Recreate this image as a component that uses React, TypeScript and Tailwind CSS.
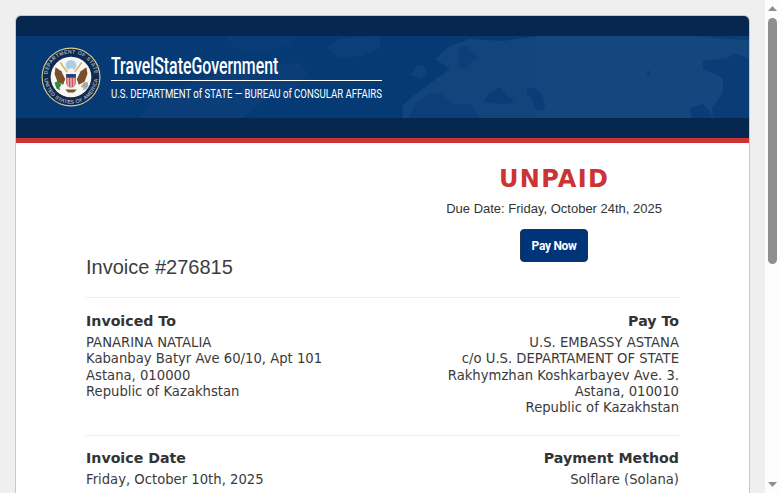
import React from 'react';

const sans = { fontFamily: '"DejaVu Sans", sans-serif' };
const arial = { fontFamily: '"Liberation Sans", sans-serif' };

const Seal = () => (
  <svg width="60" height="60" viewBox="0 0 62 62" className="shrink-0">
    <circle cx="31" cy="31" r="30.5" fill="#d9c98a" />
    <circle cx="31" cy="31" r="29.3" fill="#12294f" />
    <circle cx="31" cy="31" r="21" fill="#f6f6f4" />
    <path id="sealTop" d="M6.500 31a24.500 24.500 0 0 1 49 0" fill="none" />
    <path id="sealBottom" d="M3.500 31a27.500 27.500 0 0 0 55 0" fill="none" />
    <text fill="#dbe2ee" fontSize="5.200" fontFamily="Liberation Sans, sans-serif" letterSpacing="0.5">
      <textPath href="#sealTop" startOffset="50%" textAnchor="middle">DEPARTMENT OF STATE</textPath>
    </text>
    <text fill="#dbe2ee" fontSize="5.200" fontFamily="Liberation Sans, sans-serif" letterSpacing="0.4">
      <textPath href="#sealBottom" startOffset="50%" textAnchor="middle">UNITED STATES OF AMERICA</textPath>
    </text>
    <circle cx="31" cy="19" r="5.500" fill="#a9d0e8" />
    <path d="M15 21l6 4 4 8-2 6-6-3-3-8z" fill="#7b4f27" />
    <path d="M47 21l-6 4-4 8 2 6 6-3 3-8z" fill="#7b4f27" />
    <path d="M20 16l7 10M42 16l-7 10" stroke="#d8b25a" strokeWidth="1.500" />
    <circle cx="31" cy="25" r="3" fill="#f4f2ea" />
    <path d="M26 28h10v9a5 5 0 0 1-10 0z" fill="#c9545c" />
    <rect x="26" y="28" width="10" height="3.500" fill="#23407e" />
    <path d="M28 32v9M31 32v10M34 32v9" stroke="#f1e6e4" strokeWidth="1" />
    <path d="M14 37l4-2 3 4-2 3 1 3-4-2-1-3z" fill="#2f8a3e" />
    <path d="M48 36l-4 1-3 4 3 1-1 3 4-2 2-3z" fill="#a9a9a9" />
    <path d="M25 44h12l-3 3h-6z" fill="#7b4f27" />
  </svg>
);

// faint world map behind the banner text
const WorldMap = () => (
  <svg viewBox="0 0 733 82" preserveAspectRatio="none" className="absolute inset-0 h-full w-full">
    <g fill="#164980">
      <path d="M124 82l17-25 43-14 53-13 47-3 7 10-10 13-37 17-17 15z" opacity="0.35" />
      <path d="M210 0h70l-8 10-24 6-30-4z" opacity="0.2" />
      <path d="M311 12l14-10 39-2v12l-18 8-24 2z" opacity="0.4" />
      <path d="M387 82l-1-12 11-10 27-20 10-7-15-10 15-13 20-7 33 2 34-5h212v82z" opacity="0.8" />
      <path d="M521 0h212v82H521z" opacity="0.5" />
      <path d="M395 39l6-10 7 1 4 8-7 5z" opacity="0.5" />
    </g>
    <g fill="#0a3c77">
      <path d="M441 12l9-3 7 8 7 5-8 3-6 8-9-3 2-9z" opacity="0.7" />
      <path d="M467 66l7-10 10-5 6 7 9 8-12 2-10-1z" opacity="0.9" />
      <path d="M511 53l8-1 7 6 3 12-2 5-8-2-3-10-5-5z" opacity="0.9" />
      <path d="M400 68l12-10h14l11 10h17l10 14h-73z" opacity="0.7" />
      <path d="M687 25l25-3 5-5 10 3 6 3v59h-36l-1-10 11-15v-15l-20-9z" />
      <path d="M674 72l13-4 10 12-2 2h-20z" />
      <path d="M677 0h56v4l-20-1z" />
      <path d="M630 40l3-6 2 4z" />
    </g>
  </svg>
);

const Field = ({ title, right, lines }: { title: string; right?: boolean; lines: string[] }) => (
  <div className={right ? 'text-right' : ''}>
    <strong className="block text-[14.200px] leading-[19px] font-bold text-[#333]">{title}</strong>
    <div className="mt-[4px] text-[13.200px] leading-[16.250px] text-[#3a3a3a]">
      {lines.map((l) => (
        <div key={l}>{l}</div>
      ))}
    </div>
  </div>
);

const Scrollbar = () => (
  <div className="flex w-[15px] shrink-0 flex-col items-center bg-[#fdfdfd]">
    <svg width="9" height="5" viewBox="0 0 9 5" className="mt-[6px] fill-[#8f8f8f]">
      <path d="M4.500 0L9 5H0z" />
    </svg>
    <div className="mt-[7px] h-[246px] w-[9px] rounded-[5px] bg-[#8f8f8f]" />
    <svg width="9" height="5" viewBox="0 0 9 5" className="mt-auto mb-[6px] fill-[#8f8f8f]">
      <path d="M4.500 5L9 0H0z" />
    </svg>
  </div>
);

export default function App() {
  return (
    <div className="flex h-[493px] overflow-hidden bg-[#efefef]" style={sans}>
      <div className="min-w-0 flex-1 pt-[15px] pl-[15px] pr-[15px]">
        <div className="overflow-hidden rounded-t-[6px] border border-b-0 border-[#c8c8c8] bg-white">
          {/* Banner */}
          <div className="border-b-[5px] border-[#cc3333] bg-[#06274f] py-[20px]">
            <div className="relative h-[82px] bg-[#063a75]">
              <WorldMap />
              <div className="relative flex h-full items-center pl-[25px]">
                <Seal />
                <div className="ml-[10px] w-[271px] text-white" style={{ fontFamily: 'Roboto, sans-serif' }}>
                  <div className="h-[28px] border-b border-white">
                    <span className="block origin-left scale-x-[0.69] text-[23px] leading-[28px] font-medium whitespace-nowrap">TravelStateGovernment</span>
                  </div>
                  <div className="mt-[5px] origin-left scale-x-[0.737] text-[13px] leading-[15px] whitespace-nowrap">
                    U.S. DEPARTMENT of STATE — BUREAU of CONSULAR AFFAIRS
                  </div>
                </div>
              </div>
            </div>
          </div>

          <div className="px-[70px]">
            {/* Status + title */}
            <div className="flex items-end justify-between border-b border-[#eeeeee] pb-[19px]">
              <h1 className="text-[20px] leading-[22px] text-[#3d3d3d]" style={arial}>
                Invoice #276815
              </h1>
              <div className="mr-[17px] mb-[16px] flex flex-col items-center pt-[21px]" style={arial}>
                <div className="text-[24px] leading-[31px] font-bold tracking-[1.300px] text-[#cc3333]" style={sans}>UNPAID</div>
                <div className="mt-[5px] text-[13px] leading-[17px] text-[#333]">Due Date: Friday, October 24th, 2025</div>
                <button className="mt-[12px] h-[33px] w-[68px] rounded-[4px] border border-[#22334d] bg-[#003478] text-[12px] font-bold tracking-[-0.300px] text-white" style={{ fontFamily: 'Roboto, sans-serif' }}>
                  Pay Now
                </button>
              </div>
            </div>

            <div className="flex justify-between border-b border-[#eeeeee] pt-[14px] pb-[19px]">
              <Field title="Invoiced To" lines={['PANARINA NATALIA', 'Kabanbay Batyr Ave 60/10, Apt 101', 'Astana, 010000', 'Republic of Kazakhstan']} />
              <Field right title="Pay To" lines={['U.S. EMBASSY ASTANA', 'c/o U.S. DEPARTAMENT OF STATE', 'Rakhymzhan Koshkarbayev Ave. 3.', 'Astana, 010010', 'Republic of Kazakhstan']} />
            </div>

            <div className="flex justify-between pt-[13px] pb-[20px]">
              <Field title="Invoice Date" lines={['Friday, October 10th, 2025']} />
              <Field right title="Payment Method" lines={['Solflare (Solana)']} />
            </div>
          </div>
        </div>
      </div>
      <Scrollbar />
    </div>
  );
}
